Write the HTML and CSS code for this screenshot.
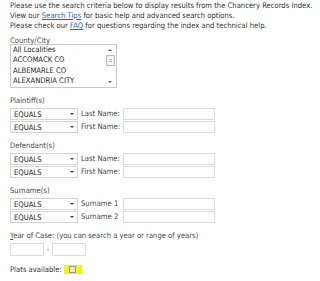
FILE: index.html
```html
<!DOCTYPE html>
<html lang="en">
<head>
    <meta charset="UTF-8">
    <title>Chancery Records Index</title>
    <link rel="stylesheet" href="styles.css">
</head>
<body>
    <div class="search">
        <p class="intro">
            Please use the search criteria below to display results from the Chancery Records Index.<br>
            View our <a href="#">Search Tips</a> for basic help and advanced search options.<br>
            Please check our <a href="#">FAQ</a> for questions regarding the index and technical help.
        </p>

        <!-- county -->
        <div class="field county">
            <div class="label">County/City</div>
            <div class="listbox">
                <ul class="options">
                    <li>All Localities</li>
                    <li>ACCOMACK CO</li>
                    <li>ALBEMARLE CO</li>
                    <li>ALEXANDRIA CITY</li>
                </ul>
                <div class="scroll">
                    <span class="arrow up"></span>
                    <span class="thumb"></span>
                    <span class="arrow down"></span>
                </div>
            </div>
        </div>

        <div class="field">
            <div class="label">Plaintiff(s)</div>
            <div class="row">
                <span class="select">EQUALS</span>
                <span class="cap">Last Name:</span>
                <span class="text"></span>
            </div>
            <div class="row">
                <span class="select">EQUALS</span>
                <span class="cap">First Name:</span>
                <span class="text"></span>
            </div>
        </div>

        <div class="field">
            <div class="label">Defendant(s)</div>
            <div class="row">
                <span class="select">EQUALS</span>
                <span class="cap">Last Name:</span>
                <span class="text"></span>
            </div>
            <div class="row">
                <span class="select">EQUALS</span>
                <span class="cap">First Name:</span>
                <span class="text"></span>
            </div>
        </div>

        <div class="field">
            <div class="label">Surname(s)</div>
            <div class="row">
                <span class="select">EQUALS</span>
                <span class="cap">Surname 1</span>
                <span class="text"></span>
            </div>
            <div class="row">
                <span class="select">EQUALS</span>
                <span class="cap">Surname 2</span>
                <span class="text"></span>
            </div>
        </div>

        <div class="field year">
            <div class="label"><u>Y</u>ear of Case: (you can search a year or range of years)</div>
            <div class="years">
                <span class="text short"></span>
                <span class="dash">-</span>
                <span class="text short"></span>
            </div>
        </div>

        <div class="plats">
            Plats available:
            <span class="mark"><span class="check"></span></span>
        </div>
    </div>
</body>
</html>
```

FILE: styles.css
```css
body{
    margin: 0;
    background: #fff;
    font-family: "DejaVu Sans Condensed", "DejaVu Sans", sans-serif;
    font-stretch: condensed;
    font-size: 7.6px;
    color: #333;
}
.search{
    padding: 0 0 0 10px;
}
.intro{
    margin: 0;
    padding-top: 1px;
    line-height: 10px;
}
.intro a{
    color: #2b62b0;
}
.field{
    margin-bottom: 8px;
}
.label{
    line-height: 10px;
    margin-bottom: 1px;
    color: #484848;
}
.county{
    margin-top: 5px;
}
.county .label{
    line-height: 9px;
    margin-bottom: -1px;
}
/*list box*/
.listbox{
    width: 105px;
    height: 42px;
    border: 1px solid #c8c8c8;
    display: flex;
    margin-bottom: 6px;
}
.options{
    list-style: none;
    margin: 0;
    padding: 0 0 0 2px;
    flex: 1;
    color: #222;
}
.options li{
    line-height: 10.3px;
}
.scroll{
    width: 10px;
    margin: 1px 1px 1px 0;
    display: flex;
    flex-direction: column;
    align-items: center;
}
.arrow{
    width: 0;
    height: 0;
    border-left: 2px solid transparent;
    border-right: 2px solid transparent;
    margin-top: 3px;
}
.arrow.up{
    border-bottom: 2px solid #666;
}
.arrow.down{
    border-top: 2px solid #666;
    margin-top: auto;
    margin-bottom: 3px;
}
.thumb{
    width: 7px;
    height: 9px;
    margin-top: 4px;
    border: 1px solid #bbb;
    background: repeating-linear-gradient(#fff 0 1px, #aaa 1px 2px) center / 3px 5px no-repeat, #f2f2f2;
}
/*rows*/
.row{
    display: flex;
    align-items: center;
    height: 13px;
}
.select{
    width: 68px;
    height: 12px;
    border: 1px solid #d4d4d4;
    box-sizing: border-box;
    padding-left: 3px;
    line-height: 11px;
    color: #222;
    position: relative;
}
.select::after{
    content: "";
    position: absolute;
    right: 3px;
    top: 4px;
    border-left: 2px solid transparent;
    border-right: 2px solid transparent;
    border-top: 2px solid #444;
}
.cap{
    width: 42px;
    margin-left: 3px;
    color: #444;
}
.text{
    display: inline-block;
    width: 92px;
    height: 12px;
    border: 1px solid #dcdcdc;
    box-sizing: border-box;
}
.year{
    margin-bottom: 0;
}
.years{
    display: flex;
    align-items: center;
    height: 14px;
}
.text.short{
    width: 34px;
    height: 13px;
}
.dash{
    width: 8px;
    text-align: center;
}
.plats{
    margin-top: 9px;
    display: flex;
    align-items: center;
    gap: 2px;
    height: 9px;
}
.mark{
    width: 18px;
    height: 9px;
    background: #f5f500;
    display: flex;
    align-items: center;
    justify-content: center;
}
.check{
    width: 7px;
    height: 7px;
    border: 1px solid #999;
    box-sizing: border-box;
    background: #e8e8c0;
}
```
